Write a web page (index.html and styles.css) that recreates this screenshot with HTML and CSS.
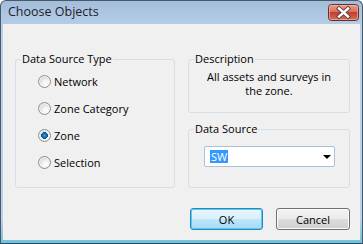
FILE: index.html
```html
<!DOCTYPE html>
<html>
<head>
<meta charset="utf-8">
<link rel="stylesheet" href="styles.css">
</head>
<body>
<div class="window">
  <div class="titlebar">
    <span class="title">Choose Objects</span>
    <button class="close" aria-label="Close">
      <svg width="31" height="17" viewBox="0 0 31 17">
        <defs>
          <linearGradient id="cg" x1="0" y1="0" x2="0" y2="1">
            <stop offset="0" stop-color="#e9a292"/>
            <stop offset="0.45" stop-color="#d66f5f"/>
            <stop offset="0.5" stop-color="#c23f2e"/>
            <stop offset="1" stop-color="#d5705a"/>
          </linearGradient>
        </defs>
        <rect x="0.5" y="0.5" width="30" height="16" rx="3" fill="url(#cg)" stroke="#6e2b26"/>
        <rect x="1.5" y="1.5" width="28" height="14" rx="2" fill="none" stroke="#f2c4bb" stroke-opacity="0.6"/>
        <path d="M11 4.5 L20 12.5 M20 4.5 L11 12.5" stroke="#5b3a38" stroke-width="4.2" stroke-linecap="square"/>
        <path d="M11 4.5 L20 12.5 M20 4.5 L11 12.5" stroke="#ffffff" stroke-width="2.4" stroke-linecap="square"/>
      </svg>
    </button>
  </div>
  <div class="client">
    <div class="columns">
      <fieldset class="group group-type">
        <legend>Data Source Type</legend>
        <div class="radio-list">
          <label class="radio"><span class="dot"></span>Network</label>
          <label class="radio"><span class="dot"></span>Zone Category</label>
          <label class="radio"><span class="dot checked"></span>Zone</label>
          <label class="radio"><span class="dot"></span>Selection</label>
        </div>
      </fieldset>
      <div class="side">
        <fieldset class="group group-desc">
          <legend>Description</legend>
          <p class="desc">All assets and surveys in<br>the zone.</p>
        </fieldset>
        <fieldset class="group group-source">
          <legend>Data Source</legend>
          <div class="combo">
            <span class="combo-value">SW</span>
            <span class="combo-arrow"></span>
          </div>
        </fieldset>
      </div>
    </div>
    <div class="buttons">
      <button class="btn btn-default ok">OK</button>
      <button class="btn cancel">Cancel</button>
    </div>
  </div>
</div>
</body>
</html>
```

FILE: styles.css
```css
* { box-sizing: border-box; }
html, body { margin: 0; padding: 0; background: #ffffff; }
body {
  font-family: "Open Sans", "Noto Sans", sans-serif;
  font-size: 11px;
  color: #000;
}
.window {
  width: 363px;
  height: 244px;
  border: 1px solid #4a5868;
  border-bottom-color: #3a4350;
  border-radius: 6px 6px 0 0;
  background: linear-gradient(#a4bdda, #b9d1ea 30px, #b9d1ea 90%, #6ec3e3);
  padding: 0 2px 2px 2px;
  display: flex;
  flex-direction: column;
}
.titlebar {
  height: 24px;
  display: flex;
  align-items: center;
  justify-content: space-between;
  padding: 0 1px 2px 5px;
}
.title {
  font-size: 12.5px;
  color: #1e1e2a;
}
.close {
  border: 0;
  padding: 0;
  background: none;
  width: 31px;
  height: 17px;
  display: block;
  margin-top: 1px;
}
.close svg { display: block; }
.client {
  flex: 1;
  background: #f0f0f0;
  border-bottom: 1px solid #6fc6e6;
  padding: 27px 10px 10px 12px;
  display: flex;
  flex-direction: column;
}
.columns {
  display: flex;
  gap: 13px;
}
.group {
  margin: 0;
  border: 1px solid #d5dfe5;
  border-radius: 3px;
  padding: 0;
  min-width: 0;
}
.group legend {
  margin-left: 5px;
  padding: 0 1px;
  line-height: 16px;
  height: 16px;
}
.group-type {
  width: 160px;
  height: 137px;
}
.radio-list {
  padding: 1px 0 0 22px;
  display: flex;
  flex-direction: column;
}
.radio {
  height: 27px;
  display: flex;
  align-items: center;
  gap: 3px;
}
.dot {
  width: 13px;
  height: 13px;
  border-radius: 50%;
  border: 1px solid #8e8f8f;
  background: radial-gradient(circle at 65% 70%, #ffffff 0, #f4f4f4 30%, #cfcfcf 85%);
  box-shadow: inset 0 0 0 1px #f4f4f4;
  flex: none;
}
.dot.checked {
  background:
    radial-gradient(circle at 50% 50%, #3aa3e1 0, #0f6cb0 2px, #0a4f86 3.4px, transparent 3.6px),
    radial-gradient(circle at 65% 70%, #ffffff 0, #f4f4f4 30%, #cfcfcf 85%);
}
.side {
  width: 162px;
  display: flex;
  flex-direction: column;
  gap: 8px;
}
.group-desc {
  height: 62px;
}
.desc {
  margin: 3px 0 0;
  text-align: center;
  line-height: 14px;
}
.group-source {
  height: 67px;
  padding: 0 14px 0 15px;
}
.group-source legend { margin-left: -10px; }
.combo {
  margin-top: 9px;
  height: 21px;
  background: #fff;
  border: 1px solid #a8c2dc;
  border-radius: 2px;
  display: flex;
  align-items: center;
  justify-content: space-between;
  padding: 0 3px 0 5px;
}
.combo-value {
  background: #3399ff;
  color: #fff;
  line-height: 13px;
  padding: 0 1px;
}
.combo-arrow {
  width: 0;
  height: 0;
  border-left: 4px solid transparent;
  border-right: 4px solid transparent;
  border-top: 4px solid #000;
  margin-top: 1px;
}
.buttons {
  margin-top: 20px;
  display: flex;
  justify-content: flex-end;
  gap: 13px;
}
.btn {
  height: 22px;
  font: inherit;
  color: #000;
  border: 1px solid #707070;
  border-radius: 3px;
  background: linear-gradient(#f2f2f2, #ebebeb 50%, #dddddd 51%, #cfcfcf);
  box-shadow: inset 0 0 0 1px #fcfcfc;
  padding: 0;
}
.ok { width: 73px; }
.cancel { width: 74px; }
.btn-default {
  border-color: #3c7fb1;
  background: linear-gradient(#eaf6fd, #d9f0fc 50%, #bee6fd 51%, #a7d9f5);
  box-shadow: inset 0 0 0 1px #48d1fc;
}
```
